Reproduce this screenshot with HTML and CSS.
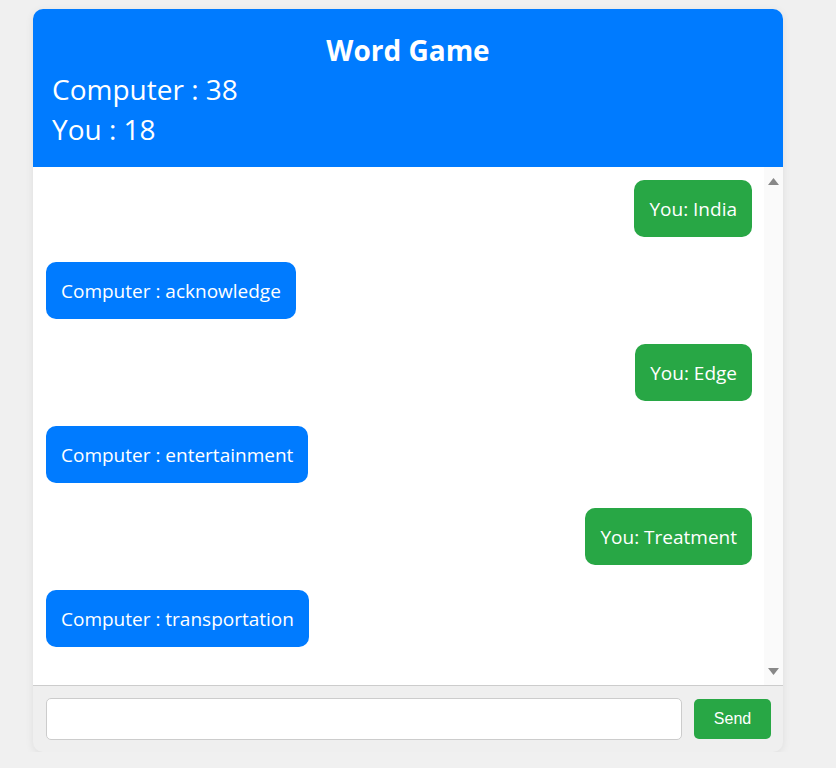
FILE: index.html
```html
<!DOCTYPE html>
<html lang="en">
<head>
<meta charset="utf-8">
<title>Word Game</title>
<link rel="stylesheet" href="styles.css">
</head>
<body>
<div class="game">
  <header class="game-header">
    <h1 class="title">Word Game</h1>
    <div class="score">Computer : 38</div>
    <div class="score">You : 18</div>
  </header>
  <div class="chat-wrap">
    <div class="chat">
      <div class="msg user">You: India</div>
      <div class="msg computer">Computer : acknowledge</div>
      <div class="msg user">You: Edge</div>
      <div class="msg computer">Computer : entertainment</div>
      <div class="msg user">You: Treatment</div>
      <div class="msg computer">Computer : transportation</div>
    </div>
    <div class="scrollbar" aria-hidden="true">
      <svg class="arrow" width="11" height="7" viewBox="0 0 11 7"><polygon points="5.5,0 11,7 0,7" fill="#888"/></svg>
      <svg class="arrow" width="11" height="7" viewBox="0 0 11 7"><polygon points="0,0 11,0 5.5,7" fill="#888"/></svg>
    </div>
  </div>
  <div class="input-bar">
    <input class="word-input" type="text">
    <button class="send-btn">Send</button>
  </div>
</div>
</body>
</html>
```
FILE: styles.css
```css
html, body {
  margin: 0;
  padding: 0;
  background: #f0f0f0;
}
body {
  font-family: "Open Sans", "Noto Sans", sans-serif;
  padding: 9px 0 0 33px;
}
.game {
  width: 750px;
  border-radius: 10px;
  overflow: hidden;
  background: #efefef;
  box-shadow: 0 2px 8px rgba(0,0,0,0.08);
}
.game-header {
  background: #007bff;
  color: #fff;
  padding: 21px 19px 18px;
}
.title {
  margin: 0 0 -1px;
  text-align: center;
  font-size: 28px;
  font-weight: 700;
  line-height: 40px;
}
.score {
  font-size: 28px;
  line-height: 40px;
}
.chat-wrap {
  display: flex;
  height: 519px;
  box-sizing: border-box;
  background: #fff;
  border-bottom: 1px solid #ccc;
}
.chat {
  flex: 1;
  overflow: hidden;
  padding: 13px 12px 0 13px;
  display: flex;
  flex-direction: column;
  align-items: flex-start;
  gap: 25px;
}
.scrollbar {
  width: 19px;
  background: #fafafa;
  display: flex;
  flex-direction: column;
  justify-content: space-between;
  align-items: center;
  padding: 11px 0 10px;
  box-sizing: border-box;
}
.arrow {
  display: block;
}
.msg {
  color: #fff;
  font-size: 19px;
  line-height: 27px;
  padding: 16px 15px 14px;
  border-radius: 10px;
  flex-shrink: 0;
}
.user {
  background: #28a745;
  align-self: flex-end;
}
.computer {
  background: #007bff;
}
.input-bar {
  display: flex;
  align-items: center;
  gap: 12px;
  padding: 12px 12px 12px 13px;
}
.word-input {
  flex: 1;
  height: 42px;
  box-sizing: border-box;
  border: 1px solid #ccc;
  border-radius: 5px;
  background: #fff;
  font-size: 16px;
}
.send-btn {
  width: 77px;
  height: 40px;
  border: none;
  border-radius: 5px;
  background: #28a745;
  color: #fff;
  font-family: "Liberation Sans", Arial, sans-serif;
  font-size: 16px;
}
```
